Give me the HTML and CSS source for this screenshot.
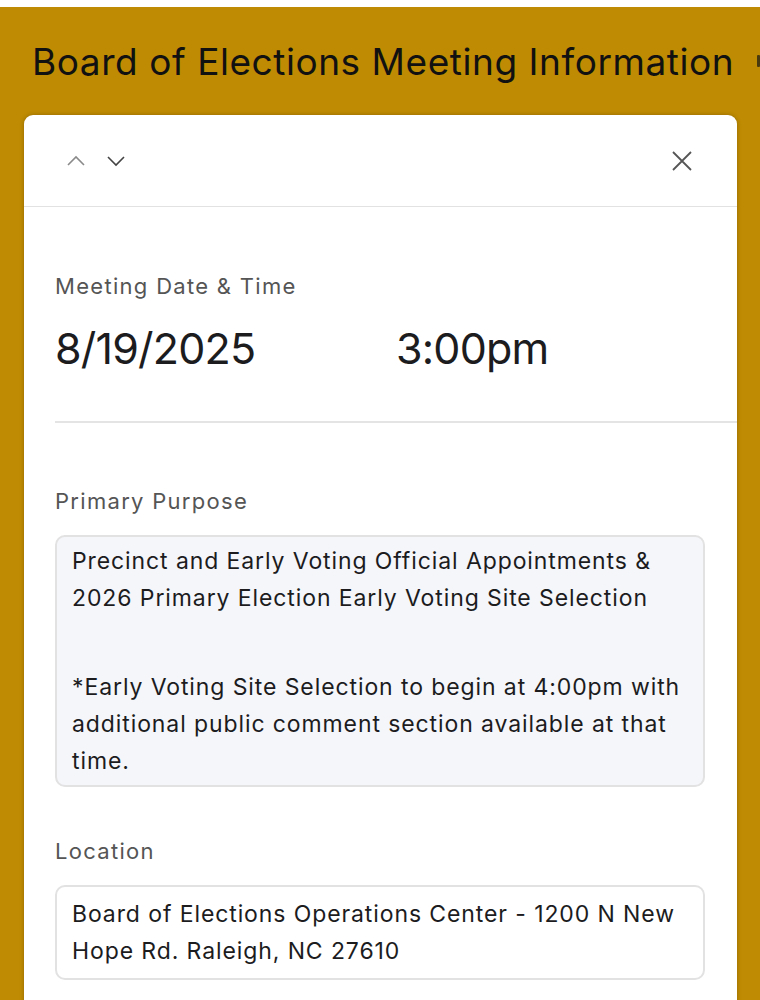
FILE: index.html
```html
<!DOCTYPE html>
<html lang="en">
<head>
    <meta charset="UTF-8">
    <meta name="viewport" content="width=device-width, initial-scale=1.0">
    <title>Board of Elections Meeting Information</title>
    <link rel="stylesheet" href="styles.css">
</head>
<body>
    <div class="page">
        <div class="title-bar">
            <h1 class="title">Board of Elections Meeting Information</h1>
            <span class="title-more"></span>
        </div>
        <div class="modal">
            <div class="modal-header">
                <div class="nav">
                    <!-- previous / next record -->
                    <button class="icon-btn prev" aria-label="Previous">
                        <svg width="20" height="12" viewBox="0 0 20 12"><path d="M2 10 L10 2 L18 10" fill="none" stroke="currentColor" stroke-width="1.6"/></svg>
                    </button>
                    <button class="icon-btn next" aria-label="Next">
                        <svg width="20" height="12" viewBox="0 0 20 12"><path d="M2 2 L10 10 L18 2" fill="none" stroke="currentColor" stroke-width="1.6"/></svg>
                    </button>
                </div>
                <button class="icon-btn close" aria-label="Close">
                    <svg width="22" height="22" viewBox="0 0 22 22"><path d="M2 2 L20 20 M20 2 L2 20" fill="none" stroke="currentColor" stroke-width="1.8"/></svg>
                </button>
            </div>
            <div class="modal-body">
                <div class="field">
                    <div class="label">Meeting Date &amp; Time</div>
                    <div class="datetime">
                        <span class="date">8/19/2025</span>
                        <span class="time">3:00pm</span>
                    </div>
                </div>
                <hr class="divider">
                <div class="field">
                    <div class="label">Primary Purpose</div>
                    <div class="box box-grey">
                        <p>Precinct and Early Voting Official Appointments &amp; 2026 Primary Election Early Voting Site Selection</p>
                        <p class="gap">*Early Voting Site Selection to begin at 4:00pm with additional public comment section available at that time.</p>
                    </div>
                </div>
                <div class="field">
                    <div class="label">Location</div>
                    <div class="box box-white">
                        <p>Board of Elections Operations Center - 1200 N New Hope Rd. Raleigh, NC 27610</p>
                    </div>
                </div>
            </div>
        </div>
    </div>
</body>
</html>
```

FILE: styles.css
```css
html, body {
    margin: 0;
    background: #fff;
    font-family: Inter, "Noto Sans", sans-serif;
}
.page {
    margin-top: 7px;
    height: 993px;
    background-color: #bf8b02;
    overflow: hidden;
}
.title-bar {
    display: flex;
    align-items: center;
    height: 108px;
    padding-left: 32px;
    white-space: nowrap;
}
.title {
    margin: 0;
    font-size: 37px;
    font-weight: 400;
    letter-spacing: 0.55px;
    color: #111;
}
.title-more {
    margin-left: 23px;
    width: 6px;
    height: 12px;
    background: #4a3a10;
    border-radius: 1px;
}
.modal {
    margin-left: 24px;
    width: 713px;
    height: 900px;
    background: #fff;
    border-radius: 9px 9px 0 0;
    box-shadow: 0 0 4px rgba(0, 0, 0, 0.25);
}
.modal-header {
    height: 91px;
    display: flex;
    align-items: center;
    justify-content: space-between;
    padding: 0 44px 0 42px;
    border-bottom: 1px solid #e2e2e2;
}
.nav {
    display: flex;
    gap: 20px;
}
.icon-btn {
    border: none;
    background: none;
    padding: 0;
    display: flex;
    cursor: pointer;
}
.prev { color: #8a8a8a; }
.next { color: #444; }
.close { color: #555; }
.modal-body {
    padding: 64px 0 0 31px;
}
.label {
    font-size: 22px;
    line-height: 30px;
    color: #555;
    letter-spacing: 1.3px;
}
.datetime {
    display: flex;
    margin-top: 21px;
    font-size: 43px;
    line-height: 52px;
    color: #1c1c1e;
    letter-spacing: -0.8px;
}
.date {
    width: 341px;
}
.divider {
    margin: 47px 0 63px 0;
    border: none;
    border-top: 2px solid #e4e4e4;
}
.field + .field {
    margin-top: 49px;
}
.box {
    margin-top: 19px;
    width: 617px;
    padding: 0 14px 0 15px;
    border: 2px solid #e2e2e2;
    border-radius: 10px;
    font-size: 23px;
    line-height: 37px;
    color: #1c1c1e;
    letter-spacing: 0.9px;
}
.box p {
    margin: 0;
}
.box .gap {
    margin-top: 52px;
}
.box-grey {
    padding-top: 6px;
    padding-bottom: 5px;
    background: #f5f6fa;
}
.box-white {
    padding-top: 9px;
    padding-bottom: 8px;
}
```
